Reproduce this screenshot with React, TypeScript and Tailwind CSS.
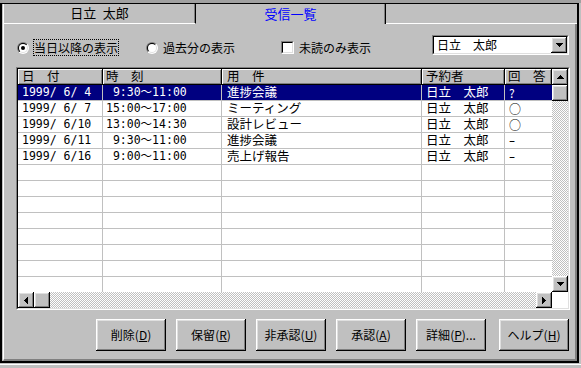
const raised =
  "shadow-[inset_-1px_-1px_0_#000,inset_1px_1px_0_#fff,inset_-2px_-2px_0_#808080,inset_2px_2px_0_#dfdfdf]";
const headerRaised =
  "shadow-[inset_-1px_-1px_0_#000,inset_1px_1px_0_#fff,inset_-2px_-2px_0_#808080]";
const jp = "font-['Noto_Sans_CJK_JP',sans-serif]";
const mono = "font-['DejaVu_Sans_Mono','Noto_Sans_CJK_JP',monospace]";
const checker =
  "bg-[repeating-conic-gradient(#c0c0c0_0%_25%,#ffffff_0%_50%)] bg-[length:2px_2px]";

type Row = {
  date: string;
  time: string;
  subject: string;
  owner: string;
  reply: string;
};

const rows: Row[] = [
  { date: "1999/ 6/ 4", time: " 9:30〜11:00", subject: "進捗会議", owner: "日立　太郎", reply: "?" },
  { date: "1999/ 6/ 7", time: "15:00〜17:00", subject: "ミーティング", owner: "日立　太郎", reply: "○" },
  { date: "1999/ 6/10", time: "13:00〜14:30", subject: "設計レビュー", owner: "日立　太郎", reply: "○" },
  { date: "1999/ 6/11", time: " 9:30〜11:00", subject: "進捗会議", owner: "日立　太郎", reply: "ｰ" },
  { date: "1999/ 6/16", time: " 9:00〜11:00", subject: "売上げ報告", owner: "日立　太郎", reply: "ｰ" },
];

const emptyRows: Row[] = Array.from({ length: 8 }, () => ({
  date: "",
  time: "",
  subject: "",
  owner: "",
  reply: "",
}));

const buttons = [
  { label: "削除", key: "D", suffix: "", gap: "ml-[92px]" },
  { label: "保留", key: "R", suffix: "", gap: "ml-[10px]" },
  { label: "非承認", key: "U", suffix: "", gap: "ml-[10px]" },
  { label: "承認", key: "A", suffix: "", gap: "ml-[10px]" },
  { label: "詳細", key: "P", suffix: "...", gap: "ml-[10px]" },
  { label: "ヘルプ", key: "H", suffix: "", gap: "ml-[13px]" },
];

function Arrow({ dir }: { dir: "up" | "down" | "left" | "right" }) {
  const vertical = dir === "up" || dir === "down";
  const points = {
    up: "3.5,0 7,4 0,4",
    down: "0,0 7,0 3.5,4",
    left: "4,0 4,7 0,3.5",
    right: "0,0 0,7 4,3.5",
  }[dir];

  return (
    <svg
      width={vertical ? 7 : 4}
      height={vertical ? 4 : 7}
      viewBox={vertical ? "0 0 7 4" : "0 0 4 7"}
      shapeRendering="crispEdges"
    >
      <polygon points={points} fill="#000" />
    </svg>
  );
}

function ScrollButton({ dir }: { dir: "up" | "down" | "left" | "right" }) {
  return (
    <div
      className={`flex h-[16px] w-[16px] shrink-0 items-center justify-center bg-[#c0c0c0] ${raised}`}
    >
      <Arrow dir={dir} />
    </div>
  );
}

function Radio({ checked = false }: { checked?: boolean }) {
  return (
    <svg width="12" height="12" viewBox="0 0 12 12" className="shrink-0">
      <defs>
        <linearGradient id="radio-outer" x1="0" y1="0" x2="1" y2="1">
          <stop offset="0.5" stopColor="#808080" />
          <stop offset="0.5" stopColor="#ffffff" />
        </linearGradient>
        <linearGradient id="radio-inner" x1="0" y1="0" x2="1" y2="1">
          <stop offset="0.5" stopColor="#000000" />
          <stop offset="0.5" stopColor="#dfdfdf" />
        </linearGradient>
      </defs>
      <circle cx="6" cy="6" r="6" fill="url(#radio-outer)" />
      <circle cx="6" cy="6" r="5" fill="url(#radio-inner)" />
      <circle cx="6" cy="6" r="4" fill="#ffffff" />
      {checked ? <circle cx="6" cy="6" r="2" fill="#000000" /> : null}
    </svg>
  );
}

function ListRow({ row, selected }: { row: Row; selected?: boolean }) {
  return (
    <div
      className={`flex h-[16px] shrink-0 border-b border-[#c0c0c0] whitespace-pre ${
        selected ? "bg-[#000080] text-white" : "bg-white text-black"
      }`}
    >
      <div className={`flex w-[85px] shrink-0 items-center border-r border-[#c0c0c0] pl-[4px] text-[11.5px] leading-none ${mono}`}>
        {row.date}
      </div>
      <div className={`flex w-[119px] shrink-0 items-center border-r border-[#c0c0c0] pl-[3px] text-[11.5px] leading-none ${mono}`}>
        {row.time}
      </div>
      <div className={`flex w-[200px] shrink-0 items-center border-r border-[#c0c0c0] pl-[5px] text-[12.5px] leading-none ${jp}`}>
        {row.subject}
      </div>
      <div className={`flex w-[83px] shrink-0 items-center border-r border-[#c0c0c0] pl-[4px] text-[12.5px] leading-none ${jp}`}>
        {row.owner}
      </div>
      <div className={`flex flex-1 items-center pl-[4px] text-[12px] leading-none ${jp}`}>{row.reply}</div>
    </div>
  );
}

function ListHeader() {
  const cells = [
    { text: "日　付", w: "w-[85px] pl-[4px]" },
    { text: "時　刻", w: "w-[119px] pl-[3px]" },
    { text: "用　件", w: "w-[200px] pl-[5px]" },
    { text: "予約者", w: "w-[83px] pl-[4px]" },
    { text: "回　答", w: "w-[47px] pl-[3px]" },
  ];

  return (
    <div className="flex h-[16px] shrink-0">
      {cells.map((cell) => (
        <div
          key={cell.text}
          className={`${cell.w} flex shrink-0 items-center bg-[#c0c0c0] pb-px text-[12.5px] leading-none text-black ${jp} ${headerRaised}`}
        >
          {cell.text}
        </div>
      ))}
    </div>
  );
}

export default function App() {
  return (
    <div className={`flex h-[368px] w-[581px] flex-col overflow-hidden bg-[#c0c0c0] ${jp}`}>
      <div className="h-[3px] shrink-0 bg-[#a0a0a0]" />

      <div className="flex h-[360px] w-[579px] shrink-0 flex-col border-t border-r-2 border-b-2 border-l-2 border-black pl-px">
        {/* tabs */}
        <div className="flex h-[20px] shrink-0">
          <div className="flex w-[193px] shrink-0 items-center justify-center border-r border-b border-l border-r-black border-b-white border-l-white pb-px text-[13px] text-black shadow-[inset_-1px_0_0_#808080]">
            日立{"\u2002"}太郎
          </div>
          <div className="flex w-[190px] shrink-0 items-center justify-center border-r border-black pb-px text-[13px] text-[#0000ff] shadow-[inset_-1px_0_0_#808080]">
            受信一覧
          </div>
          <div className="flex-1 border-b border-white" />
        </div>

        {/* body */}
        <div className="flex flex-1 flex-col border-l border-r-2 border-b-2 border-l-white border-r-[#808080] border-b-[#808080]">
          <div className="mt-[11px] flex h-[21px] shrink-0 items-start pl-[13px] text-[12px] text-black">
            <div className="mt-[4px] flex h-[17px] w-[129px] shrink-0 items-center">
              <Radio checked />
              <span className="ml-[4px] border border-dotted border-black px-0 leading-[15px]">
                当日以降の表示
              </span>
            </div>
            <div className="mt-[4px] flex h-[17px] w-[135px] shrink-0 items-center">
              <Radio />
              <span className="ml-[5px] leading-[15px]">過去分の表示</span>
            </div>
            <div className="mt-[4px] flex h-[17px] w-[151px] shrink-0 items-center">
              <div className="h-[13px] w-[13px] shrink-0 border border-t-[#808080] border-l-[#808080] border-r-white border-b-white">
                <div className="h-full w-full border border-t-black border-l-black border-r-[#dfdfdf] border-b-[#dfdfdf] bg-white" />
              </div>
              <span className="ml-[5px] leading-[15px]">未読のみ表示</span>
            </div>
            <div className="h-[20px] w-[137px] shrink-0 border border-t-[#808080] border-l-[#808080] border-r-white border-b-white">
              <div className="flex h-full items-center border border-t-black border-l-black border-r-[#dfdfdf] border-b-[#dfdfdf] bg-white">
                <span className="flex-1 pl-[3px] leading-[16px]">日立　太郎</span>
                <div className={`flex h-[16px] w-[16px] shrink-0 items-center justify-center bg-[#c0c0c0] ${raised}`}>
                  <Arrow dir="down" />
                </div>
              </div>
            </div>
          </div>

          {/* list view */}
          <div className="mt-[11px] ml-[12px] w-[554px] shrink-0 border border-t-[#808080] border-l-[#808080] border-r-white border-b-white">
            <div className="flex border border-t-black border-l-black border-r-[#dfdfdf] border-b-[#dfdfdf] bg-white">
              <div className="flex w-[534px] shrink-0 flex-col">
                <ListHeader />
                <div className="flex h-[207px] flex-col overflow-hidden">
                  {rows.map((row, index) => (
                    <ListRow key={row.date} row={row} selected={index === 0} />
                  ))}
                  {emptyRows.map((row, index) => (
                    <ListRow key={`empty-${index}`} row={row} />
                  ))}
                </div>
                <div className="flex h-[16px] shrink-0">
                  <ScrollButton dir="left" />
                  <div className={`h-[16px] w-[16px] shrink-0 bg-[#c0c0c0] ${raised}`} />
                  <div className={`flex-1 ${checker}`} />
                  <ScrollButton dir="right" />
                </div>
              </div>
              <div className="flex w-[16px] shrink-0 flex-col">
                <div className="flex h-[223px] flex-col">
                  <ScrollButton dir="up" />
                  <div className={`h-[16px] w-[16px] shrink-0 bg-[#c0c0c0] ${raised}`} />
                  <div className={`flex-1 ${checker}`} />
                  <ScrollButton dir="down" />
                </div>
                <div className="h-[16px] bg-white" />
              </div>
            </div>
          </div>

          {/* buttons */}
          <div className="mt-[9px] flex shrink-0">
            {buttons.map((button) => (
              <div
                key={button.key}
                className={`${button.gap} flex h-[32px] w-[70px] shrink-0 items-center justify-center bg-[#c0c0c0] text-[12px] text-black ${raised}`}
              >
                {button.label}(<span className="underline">{button.key}</span>){button.suffix}
              </div>
            ))}
          </div>
        </div>
      </div>

      <div className="mt-px h-px shrink-0 bg-white" />
    </div>
  );
}
